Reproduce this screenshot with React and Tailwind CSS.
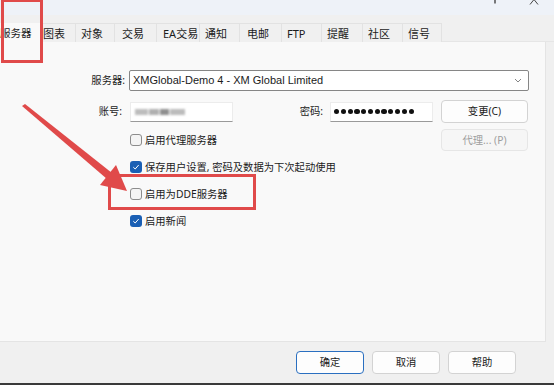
import React from "react";

const tabs = [
  { t: "图表", w: 34, pl: 1 },
  { t: "对象", w: 39, pl: 5 },
  { t: "交易", w: 42, pl: 7 },
  { t: "EA交易", w: 43, pl: 6 },
  { t: "通知", w: 40, pl: 5 },
  { t: "电邮", w: 42, pl: 7 },
  { t: "FTP", w: 40, pl: 5 },
  { t: "提醒", w: 41, pl: 5 },
  { t: "社区", w: 40, pl: 5 },
  { t: "信号", w: 39, pl: 5 },
];

function Check({ checked }) {
  return checked ? (
    <span className="flex w-[12px] h-[12px] rounded-[3px] bg-[#1a5fb4] items-center justify-center">
      <svg width="8" height="8" viewBox="0 0 8 8">
        <path d="M1.3 4.2 L3.2 6 L6.7 2" stroke="#fff" strokeWidth="1" fill="none" />
      </svg>
    </span>
  ) : (
    <span className="block w-[12px] h-[12px] rounded-[3px] border border-[#8c8c8c] bg-[#f4f4f4]" />
  );
}

function CheckRow({ checked, label }) {
  return (
    <div className="flex items-center gap-[3px] h-[14px]">
      <Check checked={checked} />
      <span>{label}</span>
    </div>
  );
}

export default function App() {
  return (
    <div className="relative w-[554px] h-[385px] overflow-hidden bg-[#f0f0f0] text-[10.3px] leading-none text-[#1b1b1b] font-['Noto_Sans','Noto_Sans_CJK_SC',sans-serif]">
      {/* title bar */}
      <div className="h-[15px] bg-[#eef2f8] flex justify-end items-start pr-[15px] gap-[32px]">
        <svg width="4" height="6" viewBox="0 0 4 6">
          <rect x="1.3" y="0" width="1.4" height="3.5" fill="#444" />
        </svg>
        <svg width="10" height="6" viewBox="0 0 10 6">
          <path d="M5 -0.5 L1 4.5 M5 -0.5 L9 4.5" stroke="#444" strokeWidth="1" fill="none" />
        </svg>
      </div>
      <div className="h-[8px]" />
      {/* tabs */}
      <div className="flex h-[19px] text-[11px]">
        <div className="w-[42px] h-[20px] bg-[#f9f9f9] flex items-center overflow-hidden">
          <span className="ml-[0px] text-[10.5px]">服务器</span>
        </div>
        {tabs.map((tb) => (
          <div
            key={tb.t}
            className="h-[19px] bg-[#f0f0f0] border-t border-r border-[#e2e2e2] flex items-center"
            style={{ width: tb.w, paddingLeft: tb.pl }}
          >
            {tb.t}
          </div>
        ))}
        <div className="flex-1 border-b border-[#e6e6e6]" />
      </div>
      {/* panel */}
      <div className="w-[546px] h-[300px] bg-[#f9f9f9] border-r border-b border-[#e4e4e4] pt-[28px]">
        <div className="flex items-center h-[21px]">
          <div className="w-[125px] text-right">服务器:</div>
          <div className="ml-[4px] w-[400px] h-[21px] bg-white border border-[#868686] rounded-[2px] flex items-center pl-[3px] pr-[6px]">
            <span className="flex-1 text-[11px] font-['Liberation_Sans',sans-serif]">XMGlobal-Demo 4 - XM Global Limited</span>
            <svg width="8" height="5" viewBox="0 0 8 5">
              <path d="M1 1 L4 4 L7 1" stroke="#777" strokeWidth="0.9" fill="none" />
            </svg>
          </div>
        </div>
        <div className="flex items-center h-[23px] mt-[9px]">
          <div className="w-[122px] text-right">账号:</div>
          <div className="ml-[8px] w-[103px] h-[20px] bg-white border border-[#ececec] border-b-[#9a9a9a] flex items-center pl-[4px]">
            <div className="flex items-center blur-[1.3px] gap-[1px]">
              <span className="block w-[13px] h-[6px] bg-[#bdbdbd]" />
              <span className="block w-[10px] h-[6px] bg-[#b0b0b0]" />
              <span className="block w-[9px] h-[6px] bg-[#8f8f8f]" />
              <span className="block w-[15px] h-[6px] bg-[#bcbcbc]" />
            </div>
          </div>
          <div className="w-[90px] text-right">密码:</div>
          <div className="ml-[7px] w-[103px] h-[20px] bg-white border border-[#ececec] border-b-[#9a9a9a] flex items-center pl-[3px] gap-[1.6px]">
            {Array.from({ length: 12 }).map((_, i) => (
              <span key={i} className="block w-[5.2px] h-[5.2px] rounded-full bg-[#111]" />
            ))}
          </div>
          <button className="ml-[8px] w-[87px] h-[23px] rounded-[4px] bg-[#fdfdfd] border border-[#d3d3d3] flex items-center justify-center">
            变更(C)
          </button>
        </div>
        <div className="flex items-center h-[22px] mt-[6px]">
          <div className="w-[441px] pl-[130px]">
            <CheckRow checked={false} label="启用代理服务器" />
          </div>
          <button className="w-[87px] h-[22px] rounded-[4px] bg-[#f6f6f6] border border-[#e6e6e6] text-[#9e9e9e] flex items-center justify-center">
            代理... (P)
          </button>
        </div>
        <div className="pl-[130px] mt-[9px]">
          <CheckRow checked label="保存用户设置, 密码及数据为下次起动使用" />
        </div>
        <div className="pl-[130px] mt-[13px]">
          <CheckRow checked={false} label="启用为DDE服务器" />
        </div>
        <div className="pl-[130px] mt-[13px]">
          <CheckRow checked label="启用新闻" />
        </div>
      </div>
      {/* footer */}
      <div className="h-[41px] flex justify-end items-start pt-[9px] pr-[38px] gap-[8px]">
        <button className="w-[68px] h-[23px] rounded-[4px] bg-[#fdfdfd] border border-[#2a6fc0] flex items-center justify-center">确定</button>
        <button className="w-[68px] h-[23px] rounded-[4px] bg-[#fdfdfd] border border-[#d3d3d3] flex items-center justify-center">取消</button>
        <button className="w-[68px] h-[23px] rounded-[4px] bg-[#fdfdfd] border border-[#d3d3d3] flex items-center justify-center">帮助</button>
      </div>
      <div className="h-[2px] bg-[#3a3a3a]" />

      {/* red annotations */}
      <div className="absolute left-[1px] top-[-1px] w-[42px] h-[64px] border-[3px] border-[#e04a4a] pointer-events-none" />
      <div className="absolute left-[108px] top-[174px] w-[148px] h-[36px] border-[3px] border-[#e04a4a] pointer-events-none" />
      <svg className="absolute left-0 top-0 pointer-events-none" width="554" height="385">
        <polygon points="22,106 25,104 112,173 107,179" fill="#e04a4a" />
        <polygon points="127,191 100,185 116,165" fill="#e04a4a" />
      </svg>
    </div>
  );
}
